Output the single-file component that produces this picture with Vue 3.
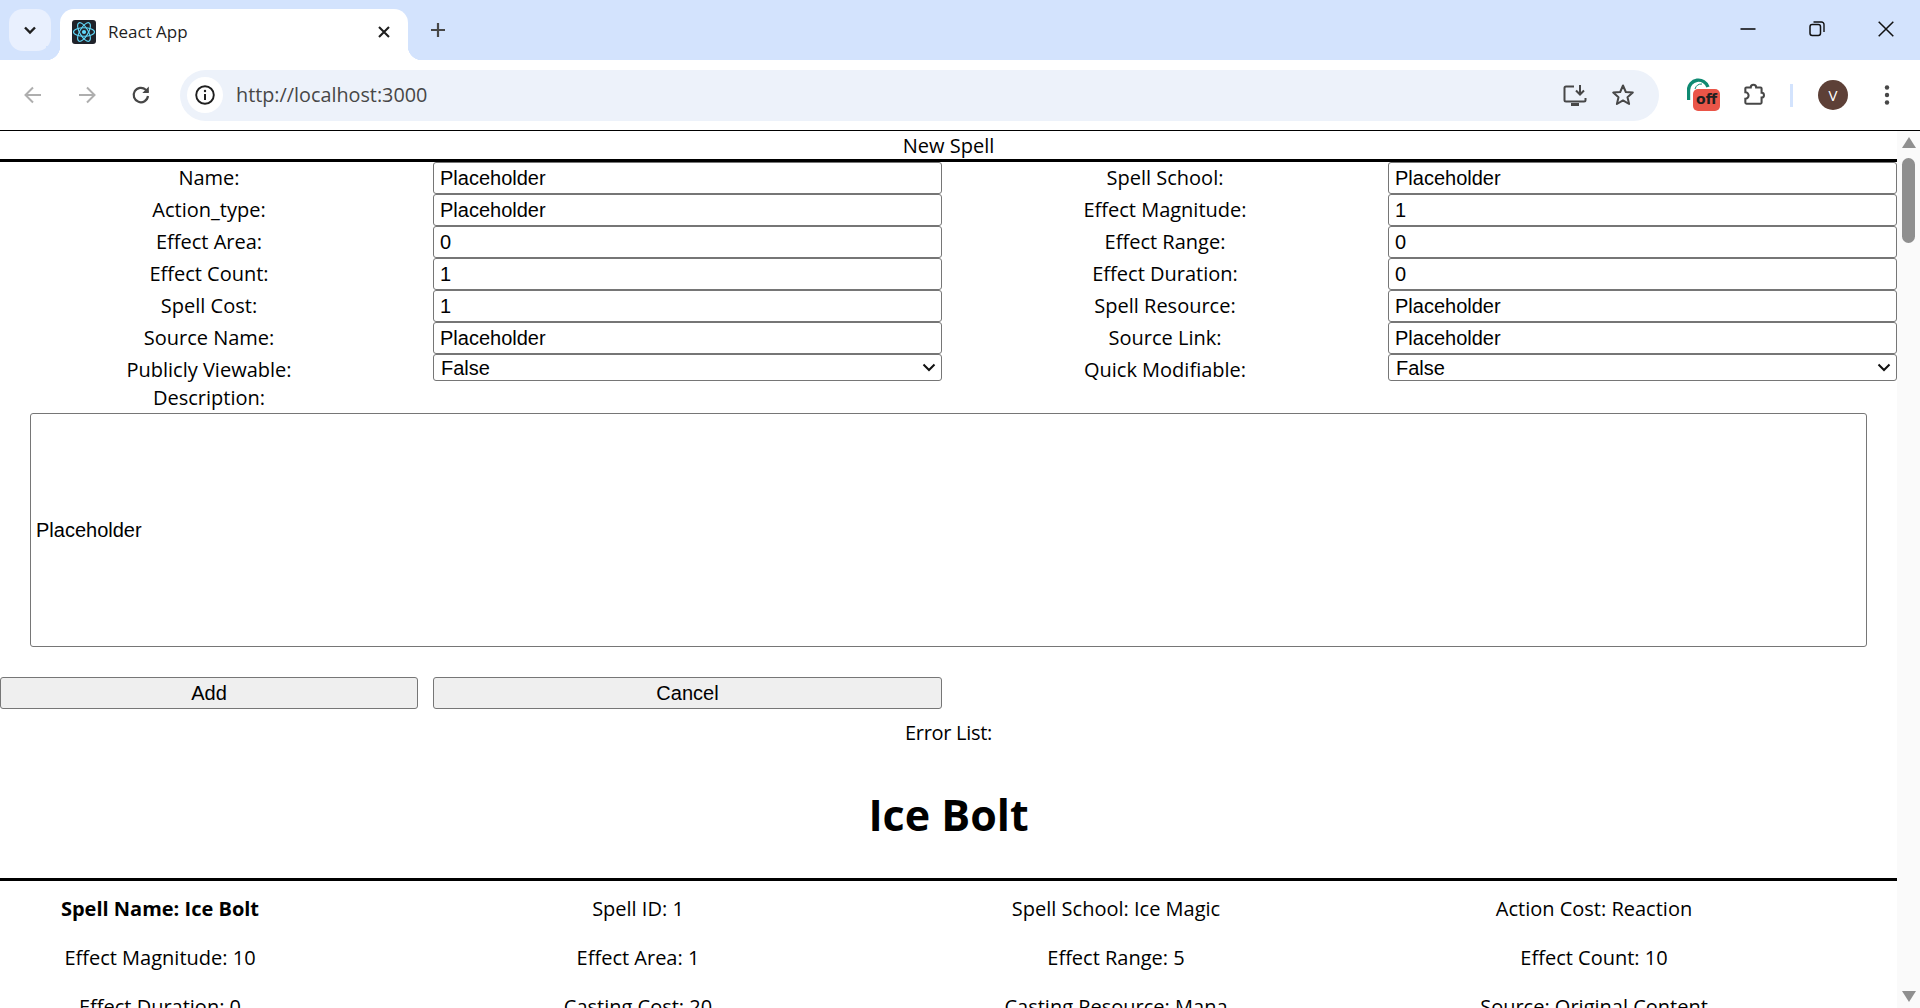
<script setup>
const rows = [
  ['Name:', 'Placeholder', 'Spell School:', 'Placeholder'],
  ['Action_type:', 'Placeholder', 'Effect Magnitude:', '1'],
  ['Effect Area:', '0', 'Effect Range:', '0'],
  ['Effect Count:', '1', 'Effect Duration:', '0'],
  ['Spell Cost:', '1', 'Spell Resource:', 'Placeholder'],
  ['Source Name:', 'Placeholder', 'Source Link:', 'Placeholder'],
]
const details = [
  'Spell Name: Ice Bolt', 'Spell ID: 1', 'Spell School: Ice Magic', 'Action Cost: Reaction',
  'Effect Magnitude: 10', 'Effect Area: 1', 'Effect Range: 5', 'Effect Count: 10',
  'Effect Duration: 0', 'Casting Cost: 20', 'Casting Resource: Mana', 'Source: Original Content',
]
</script>

<template>
  <div class="window">
    <div class="tabstrip">
      <div class="tabsearch">
        <svg width="16" height="16" viewBox="0 0 16 16"><path d="M3 5.5 8 10.5 13 5.5" fill="none" stroke="#1f1f1f" stroke-width="2.4"/></svg>
      </div>
      <div class="tab">
        <svg class="favicon" width="24" height="24" viewBox="0 0 24 24">
          <rect width="24" height="24" rx="3" fill="#20232a"/>
          <g fill="none" stroke="#61dafb" stroke-width="1.1">
            <ellipse cx="12" cy="12" rx="10.5" ry="4.2"/>
            <ellipse cx="12" cy="12" rx="10.5" ry="4.2" transform="rotate(60 12 12)"/>
            <ellipse cx="12" cy="12" rx="10.5" ry="4.2" transform="rotate(120 12 12)"/>
          </g>
          <circle cx="12" cy="12" r="2.1" fill="#61dafb"/>
        </svg>
        <span class="tabtitle">React App</span>
        <svg class="tabclose" width="14" height="14" viewBox="0 0 14 14"><path d="M2 2 12 12M12 2 2 12" stroke="#1f1f1f" stroke-width="2.1"/></svg>
      </div>
      <svg class="newtab" width="18" height="18" viewBox="0 0 18 18"><path d="M9 2V16M2 9H16" stroke="#474747" stroke-width="2.2"/></svg>
      <div class="wincontrols">
        <svg width="16" height="16" viewBox="0 0 16 16"><path d="M0.5 8H15.5" stroke="#111" stroke-width="1.6"/></svg>
        <svg width="16" height="16" viewBox="0 0 16 16"><rect x="1" y="3.5" width="10.5" height="11" rx="2.2" fill="none" stroke="#111" stroke-width="1.5"/><path d="M4.5 1H12.5a2.5 2.5 0 0 1 2.5 2.5V11" fill="none" stroke="#111" stroke-width="1.4"/></svg>
        <svg width="16" height="16" viewBox="0 0 16 16"><path d="M0.7 0.7 15.3 15.3M15.3 0.7 0.7 15.3" stroke="#111" stroke-width="1.5"/></svg>
      </div>
    </div>

    <div class="toolbar">
      <svg class="navicon" width="24" height="24" viewBox="0 0 24 24"><path d="M20 12H5M12 4.5 4.5 12 12 19.5" fill="none" stroke="#aeaeae" stroke-width="2"/></svg>
      <svg class="navicon" width="24" height="24" viewBox="0 0 24 24"><path d="M4 12H19M12 4.5 19.5 12 12 19.5" fill="none" stroke="#aeaeae" stroke-width="2"/></svg>
      <svg class="navicon" width="24" height="24" viewBox="0 0 24 24"><path d="M19 13a7.2 7.2 0 1 1-2.2-6.2L19 9" fill="none" stroke="#474747" stroke-width="2.2"/><path d="M19.8 3.5V10h-6.5z" fill="#474747"/></svg>
      <div class="omnibox">
        <div class="infochip">
          <svg width="22" height="22" viewBox="0 0 22 22"><circle cx="11" cy="11" r="8.8" fill="none" stroke="#1f1f1f" stroke-width="1.9"/><path d="M11 10V16" stroke="#1f1f1f" stroke-width="2"/><circle cx="11" cy="7" r="1.2" fill="#1f1f1f"/></svg>
        </div>
        <span class="url">http://localhost:3000</span>
        <div class="omniright">
          <svg width="26" height="26" viewBox="0 0 26 26"><path d="M12 4.5H4a1.5 1.5 0 0 0-1.5 1.5V18A1.5 1.5 0 0 0 4 19.5H22A1.5 1.5 0 0 0 23.5 18V16" fill="none" stroke="#474747" stroke-width="2"/><path d="M9 22.5H17" stroke="#474747" stroke-width="3"/><path d="M18 3V12M14 8.5 18 12.5 22 8.5" fill="none" stroke="#474747" stroke-width="2"/></svg>
          <svg width="26" height="26" viewBox="0 0 26 26"><path d="M13 3.5 15.8 10 22.8 10.6 17.5 15.2 19.1 22 13 18.4 6.9 22 8.5 15.2 3.2 10.6 10.2 10Z" fill="none" stroke="#474747" stroke-width="2" stroke-linejoin="round"/></svg>
        </div>
      </div>
      <div class="tools">
        <div class="offext">
          <svg width="26" height="24" viewBox="0 0 26 24"><path d="M1.5 22V12A10 10 0 0 1 21 9" fill="none" stroke="#0f8a72" stroke-width="3.4"/><path d="M8 11A7 7 0 0 1 15 6" fill="none" stroke="#0f8a72" stroke-width="1"/></svg>
          <span class="offbadge">off</span>
        </div>
        <svg class="puzzle" width="26" height="26" viewBox="0 0 24 24"><path d="M5 5H9A2.5 2.5 0 0 1 14 5H18A1 1 0 0 1 19 6V10A2.2 2.2 0 0 1 19 14.4V19A1 1 0 0 1 18 20H5A1 1 0 0 1 4 19V15.5A3 3 0 0 0 4 9.5V6A1 1 0 0 1 5 5Z" fill="none" stroke="#474747" stroke-width="1.9"/></svg>
        <span class="divider"></span>
        <span class="avatar">V</span>
        <svg class="kebab" width="6" height="24" viewBox="0 0 6 24"><circle cx="3" cy="4.5" r="2.2" fill="#474747"/><circle cx="3" cy="12" r="2.2" fill="#474747"/><circle cx="3" cy="19.5" r="2.2" fill="#474747"/></svg>
      </div>
    </div>

    <div class="viewport">
      <main class="page">
        <div class="newspell">New Spell</div>
        <form class="form" @submit.prevent>
          <template v-for="row in rows" :key="row[0]">
            <label class="lbl">{{ row[0] }}</label>
            <input class="field" :value="row[1]" />
            <label class="lbl">{{ row[2] }}</label>
            <input class="field" :value="row[3]" />
          </template>
          <label class="lbl">Publicly Viewable:</label>
          <select class="field sel"><option>False</option></select>
          <label class="lbl">Quick Modifiable:</label>
          <select class="field sel"><option>False</option></select>
          <label class="lbl desc">Description:</label>
        </form>
        <input class="descbox" value="Placeholder" />
        <div class="form buttons">
          <button class="btn" type="button">Add</button>
          <button class="btn" type="button">Cancel</button>
        </div>
        <div class="errors">Error List:</div>
        <h1 class="title">Ice Bolt</h1>
        <section class="details">
          <p v-for="(d, i) in details" :key="d" :class="{ strong: i === 0 }">{{ d }}</p>
        </section>
      </main>
      <aside class="scrollbar">
        <span class="arrow up"></span>
        <span class="thumb"></span>
        <span class="arrow down"></span>
      </aside>
    </div>
  </div>
</template>

<style>
html, body { margin: 0; overflow: hidden; }
</style>

<style scoped>
.window {
  width: 1920px;
  height: 1008px;
  display: flex;
  flex-direction: column;
  overflow: hidden;
  background: #fff;
  font-family: "Open Sans", sans-serif;
  color: #000;
}
.tabstrip {
  height: 60px;
  flex: none;
  display: flex;
  align-items: flex-start;
  background: #d3e3fd;
  padding-left: 9px;
  box-sizing: border-box;
}
.tabsearch {
  width: 42px;
  height: 42px;
  margin-top: 9px;
  border-radius: 14px;
  background: #e9f0fe;
  display: flex;
  align-items: center;
  justify-content: center;
}
.tab {
  position: relative;
  width: 348px;
  height: 51px;
  margin-top: 9px;
  margin-left: 9px;
  background: #fff;
  border-radius: 14px 14px 0 0;
  display: flex;
  align-items: center;
  padding: 0 17px 6px 12px;
  box-sizing: border-box;
}
.tab::before, .tab::after {
  content: "";
  position: absolute;
  bottom: 0;
  width: 14px;
  height: 14px;
}
.tab::before { left: -14px; background: radial-gradient(circle at 0 0, #d3e3fd 14px, #fff 14.5px); }
.tab::after { right: -14px; background: radial-gradient(circle at 100% 0, #d3e3fd 14px, #fff 14.5px); }
.favicon { flex: none; }
.tabtitle {
  margin-left: 12px;
  flex: 1;
  font-size: 17px;
  color: #1f1f1f;
}
.newtab { margin: 21px 0 0 21px; }
.wincontrols {
  margin-left: auto;
  display: flex;
  gap: 53px;
  padding: 21px 26px 0 0;
}
.toolbar {
  height: 70px;
  flex: none;
  display: flex;
  align-items: center;
  background: #fff;
  border-radius: 14px 14px 0 0;
  padding: 0 0 0 21px;
  box-sizing: border-box;
  position: relative;
  gap: 30px;
}
.navicon { flex: none; }
.omnibox {
  width: 1479px;
  height: 51px;
  margin-left: -3px;
  border-radius: 26px;
  background: #edf2fa;
  display: flex;
  align-items: center;
  padding-left: 7px;
  box-sizing: border-box;
  flex: none;
}
.infochip {
  width: 36px;
  height: 36px;
  border-radius: 50%;
  background: #fff;
  display: flex;
  align-items: center;
  justify-content: center;
}
.url {
  margin: 0 0 2px 13px;
  font-size: 19.8px;
  color: #474747;
}
.omniright {
  margin-left: auto;
  display: flex;
  gap: 22px;
  padding-right: 23px;
}
.tools {
  display: flex;
  align-items: center;
  margin-left: -2px;
  position: relative;
}
.offext {
  position: relative;
  width: 34px;
  height: 34px;
}
.offext svg { position: absolute; left: 0; top: 0; }
.offbadge {
  position: absolute;
  left: 6px;
  top: 11px;
  width: 27px;
  height: 22px;
  border-radius: 5px;
  background: #ea5548;
  color: #202020;
  font: 700 14px/21px "DejaVu Sans", sans-serif;
  text-align: center;
}
.puzzle { margin-left: 20px; }
.divider {
  width: 3px;
  height: 23px;
  margin-left: 23px;
  background: #d3e3fd;
}
.avatar {
  width: 30px;
  height: 30px;
  margin-left: 25px;
  border-radius: 50%;
  background: #5d4037;
  color: #fff;
  font-size: 15px;
  line-height: 30px;
  text-align: center;
}
.kebab { margin-left: 36px; }

.viewport {
  flex: 1;
  min-height: 0;
  display: flex;
  border-top: 1px solid #000;
}
.page {
  width: 1897px;
  flex: none;
  overflow: hidden;
}
.newspell {
  height: 28px;
  border-bottom: 3px solid #000;
  text-align: center;
  font-size: 20px;
  line-height: 30px;
}
.form {
  display: grid;
  grid-template-columns: 418px 509px 416px 509px;
  column-gap: 15px;
}
.lbl {
  height: 32px;
  line-height: 32px;
  font-size: 20px;
  text-align: center;
}
.lbl.desc { height: 27px; line-height: 24px; }
.field {
  height: 32px;
  box-sizing: border-box;
  border: 1px solid #767676;
  border-radius: 3px;
  padding: 0 5px 0 6px;
  margin: 0;
  width: 100%;
  font: 20px "Liberation Sans", Arial, sans-serif;
  color: #000;
  background: #fff;
  outline: none;
}
.sel {
  height: 27px;
  padding: 0 7px;
  appearance: none;
  background: #fff url("data:image/svg+xml,%3Csvg xmlns='http://www.w3.org/2000/svg' width='14' height='9'%3E%3Cpath d='M1.5 1.5 7 7l5.5-5.5' fill='none' stroke='%23111' stroke-width='2'/%3E%3C/svg%3E") no-repeat right 5px center;
}
.descbox {
  display: block;
  width: 1837px;
  height: 234px;
  margin: 0 0 30px 30px;
  box-sizing: border-box;
  border: 1px solid #767676;
  border-radius: 3px;
  padding: 0 5px;
  font: 20px "Liberation Sans", Arial, sans-serif;
  color: #000;
  outline: none;
}
.buttons { grid-template-columns: 418px 509px; }
.btn {
  height: 32px;
  box-sizing: border-box;
  border: 1px solid #767676;
  border-radius: 3px;
  background: #efefef;
  font: 20px "Liberation Sans", Arial, sans-serif;
  color: #000;
  padding: 0;
}
.errors {
  margin-top: 10px;
  height: 28px;
  line-height: 28px;
  font-size: 20px;
  letter-spacing: -0.3px;
  text-align: center;
}
.title {
  margin: 0;
  height: 134px;
  box-sizing: border-box;
  border-bottom: 3px solid #000;
  padding-top: 41px;
  font-size: 43px;
  line-height: 54px;
  font-weight: 700;
  text-align: center;
}
.details {
  display: grid;
  grid-template-columns: repeat(4, 320px);
  column-gap: 158px;
  padding-top: 16px;
}
.details p {
  margin: 0;
  height: 49px;
  line-height: 24px;
  font-size: 20px;
  text-align: center;
  white-space: nowrap;
}
.details p.strong { font-weight: 700; }
.scrollbar {
  flex: 1;
  background: #fafafa;
  display: flex;
  flex-direction: column;
  align-items: center;
  padding: 6px 0 6px;
  box-sizing: border-box;
}
.arrow {
  width: 0;
  height: 0;
  border-left: 7.5px solid transparent;
  border-right: 7.5px solid transparent;
}
.arrow.up { border-bottom: 11px solid #8f8f8f; }
.arrow.down { border-top: 11px solid #8f8f8f; margin-top: auto; }
.thumb {
  width: 13px;
  height: 85px;
  margin-top: 10px;
  border-radius: 7px;
  background: #8f8f8f;
}
</style>
